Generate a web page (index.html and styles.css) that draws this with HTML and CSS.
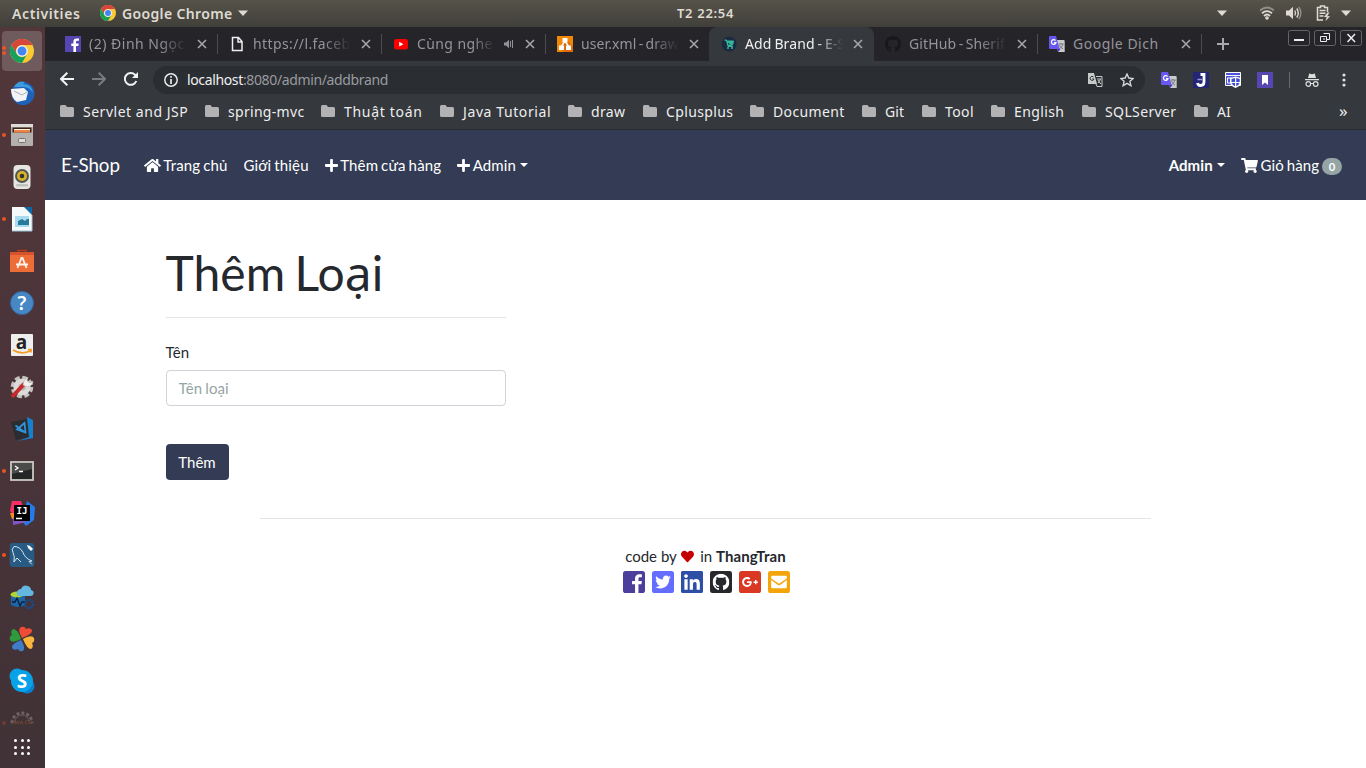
FILE: index.html
```html
<!DOCTYPE html>
<html lang="vi">
<head>
<meta charset="utf-8">
<title>Add Brand - E-Shop</title>
<link rel="stylesheet" href="styles.css">
</head>
<body>
<svg class="defs" aria-hidden="true">
  <symbol id="chrome" viewBox="0 0 24 24"><circle cx="12" cy="12" r="12" fill="#fcc934"/><path d="M1.6 6A12 12 0 0 1 22.4 6H12a6 6 0 0 0-5.2 9z" fill="#d8453a"/><path d="M1.6 6A12 12 0 0 0 12 24l5.2-9A6 6 0 0 1 6.8 15z" fill="#16a05b"/><circle cx="12" cy="12" r="5.8" fill="#f4f4f4"/><circle cx="12" cy="12" r="4.5" fill="#4285f4"/></symbol>
  <symbol id="folder" viewBox="0 0 14 12"><path d="M0 1.5Q0 0 1.500 0H5.500L7 2H12.500Q14 2 14 3.500V10.500Q14 12 12.500 12H1.500Q0 12 0 10.500z" fill="#b2b2b4"/></symbol>
  <symbol id="x" viewBox="0 0 10 10"><path d="M1 1l8 8M9 1L1 9" stroke="currentColor" stroke-width="1.600"/></symbol>
  <symbol id="translate" viewBox="0 0 16 16"><path d="M7 4h7.500a1.200 1.200 0 0 1 1.200 1.200V16H9z" fill="#c9cacb"/><path d="M9.500 8h5M12 7v1m2 0c-.5 2-2 4-4 5m.5-4c.8 2 2 3 3.500 4" stroke="#75777b" fill="none"/><path d="M1 0h6l3.600 13H1.200A1.200 1.200 0 0 1 0 11.800V1.200Q0 0 1 0z" fill="#6757f3"/><path d="M8.500 13h3L9 16z" fill="#4430c8"/><path d="M6.500 4.500A2.300 2.300 0 1 0 7 6.600H5" fill="none" stroke="#fff" stroke-width="1.200"/></symbol>
  <symbol id="octocat" viewBox="0 0 16 16"><path d="M8 0C3.580 0 0 3.580 0 8c0 3.540 2.290 6.530 5.470 7.590.4.070.55-.17.55-.38 0-.19-.01-.82-.01-1.490-2.010.37-2.530-.49-2.690-.94-.09-.23-.48-.94-.82-1.130-.28-.15-.68-.52-.01-.53.63-.01 1.080.58 1.230.82.72 1.210 1.870.87 2.330.66.070-.52.280-.87.510-1.070-1.780-.2-3.640-.89-3.640-3.950 0-.87.310-1.590.82-2.150-.08-.2-.36-1.020.08-2.120 0 0 .67-.21 2.200.82.640-.18 1.320-.27 2-.27s1.360.09 2 .27c1.530-1.040 2.200-.82 2.200-.82.440 1.100.160 1.920.08 2.120.510.560.82 1.270.82 2.150 0 3.070-1.870 3.750-3.650 3.950.290.250.540.730.540 1.480 0 1.070-.01 1.930-.01 2.200 0 .210.150.460.550.380A8.010 8.010 0 0 0 16 8c0-4.420-3.580-8-8-8z"/></symbol>
  <symbol id="plus" viewBox="0 0 448 512"><path d="M416 208H272V64c0-17.670-14.330-32-32-32h-32c-17.670 0-32 14.330-32 32v144H32c-17.670 0-32 14.330-32 32v32c0 17.670 14.330 32 32 32h144v144c0 17.670 14.330 32 32 32h32c17.670 0 32-14.330 32-32V304h144c17.670 0 32-14.330 32-32v-32c0-17.670-14.330-32-32-32z"/></symbol>
  <symbol id="cart" viewBox="0 0 576 512"><path d="M528.120 301.319l47.273-208C578.806 78.301 567.391 64 551.990 64H159.208l-9.166-44.810C147.758 8.021 137.930 0 126.529 0H24C10.745 0 0 10.745 0 24v16c0 13.255 10.745 24 24 24h69.883l70.248 343.435C147.325 417.100 136 435.222 136 456c0 30.928 25.072 56 56 56s56-25.072 56-56c0-15.674-6.447-29.835-16.824-40h209.647C430.447 426.165 424 440.326 424 456c0 30.928 25.072 56 56 56s56-25.072 56-56c0-22.172-12.888-41.332-31.579-50.405l5.517-24.276c3.413-15.018-8.002-29.319-23.403-29.319H218.117l-6.545-32h293.145c11.206 0 20.920-7.754 23.403-18.681z"/></symbol>
</svg>

<header class="topbar">
  <span class="activities">Activities</span>
  <svg class="app-icon"><use href="#chrome"/></svg>
  <span class="app-name">Google Chrome</span>
  <svg class="tri" viewBox="0 0 10 6"><path d="M0 .5h10L5 6z"/></svg>
  <span class="clock">T2 22:54</span>
  <div class="tray">
    <svg class="tri" viewBox="0 0 10 6"><path d="M0 .5h10L5 6z"/></svg>
    <svg class="wifi" viewBox="0 0 14 14"><path d="M0 4.500Q7-1.500 14 4.500" fill="none" stroke="#8f8d86" stroke-width="1.800"/><path d="M2 7.300Q7 3 12 7.300M4 10Q7 7 10 10" fill="none" stroke="#dfdbd2" stroke-width="1.800"/><circle cx="7" cy="12" r="1.800" fill="#dfdbd2"/></svg>
    <svg class="vol" viewBox="0 0 16 14"><path d="M0 4.500h3L7 .7v12.600L3 9.500H0z" fill="#dfdbd2"/><path d="M8.800 4.500q1.500 2.500 0 5M10.800 2.500q3 4.500 0 9" stroke="#dfdbd2" stroke-width="1.400" fill="none"/><path d="M12.800.8q4.200 6.200 0 12.400" stroke="#96948c" stroke-width="1.300" fill="none"/></svg>
    <svg class="bat" viewBox="0 0 15 16"><path d="M11.500 7V2.500h-3V1H4.500v1.500h-3V15H7" fill="none" stroke="#dfdbd2" stroke-width="1.500"/><path d="M3.500 5.500h6M3.500 8.300h6M3.500 11h4" stroke="#dfdbd2" stroke-width="1.500"/><path d="M11.500 7.500L8 12h2.700L9.500 16l4.700-4.800h-3L13.500 7.500z" fill="#dfdbd2"/></svg>
    <svg class="tri last" viewBox="0 0 10 6"><path d="M0 .5h10L5 6z"/></svg>
  </div>
</header>

<div class="desktop">
<nav class="dock">
  <div class="cell active two"><svg><use href="#chrome"/></svg></div>
  <div class="cell"><svg viewBox="0 0 24 24"><circle cx="13" cy="12.500" r="11.500" fill="#1d62b8"/><path d="M4 6Q8-1 15 1l-2 2Q22 3 23 12q-4-7-11-6z" fill="#3d9be0"/><path d="M1 8l13-1 4 4-2 8-9 2q-6-4-6-13z" fill="#f2f3f5"/><path d="M4 10l8 4 5-3" stroke="#a9adb8" fill="none"/></svg></div>
  <div class="cell one"><svg viewBox="0 0 24 24"><rect x="1" y="1" width="22" height="22" rx="1" fill="#b3b0ad"/><rect x="1" y="1" width="22" height="3" fill="#dedbd8"/><rect x="2.500" y="4.500" width="19" height="5" fill="#3c2418"/><rect x="4" y="6" width="16" height="3.500" fill="#ef8345"/><rect x="4" y="6" width="16" height="1" fill="#fff0dc"/><rect x="8.500" y="15.500" width="7" height="4" rx="1" fill="#ddd" stroke="#77736f"/></svg></div>
  <div class="cell"><svg viewBox="0 0 24 24"><rect x="3.500" y="0" width="17" height="24" rx="4" fill="#e5e5e3"/><circle cx="12" cy="11" r="7" fill="#55564f"/><circle cx="12" cy="11" r="5" fill="#d6b52a"/><circle cx="12" cy="11" r="2.300" fill="#333"/><rect x="6" y="19" width="12" height="2.500" rx="1" fill="#c1c1bf"/></svg></div>
  <div class="cell one"><svg viewBox="0 0 24 24"><path d="M2 0h13l7 7v17H2z" fill="#f6f9fa"/><path d="M14 0h8v8z" fill="#0f6aa3"/><path d="M22 8v16H2" stroke="#9fc4d8" fill="none"/><rect x="5" y="9" width="14" height="11" fill="#a8dbf0"/><path d="M8 18v-4l4-2 3 2 2-2h2v6z" fill="#287a9c"/></svg></div>
  <div class="cell"><svg viewBox="0 0 24 24"><path d="M8 5V1.500h8V5" stroke="#b83818" stroke-width="1.500" fill="none"/><path d="M0 3h24v20H0z" fill="#ed6d38"/><path d="M0 3h24v3H0z" fill="#d5542c"/><path d="M7.500 19l4-10h1l4 10M6 15.500h12" stroke="#fff2e8" stroke-width="1.800" fill="none"/></svg></div>
  <div class="cell"><svg viewBox="0 0 24 24"><circle cx="12" cy="12" r="11.500" fill="#4787c4" stroke="#306aa4"/><text x="12" y="19" text-anchor="middle" class="glyph help">?</text></svg></div>
  <div class="cell"><svg viewBox="0 0 24 24"><rect x="1" y="1" width="22" height="22" rx="1" fill="#eee"/><text x="11.500" y="15.500" text-anchor="middle" class="glyph amazon">a</text><path d="M3 17q9 5.500 18 .5M18 16.500h3v3" stroke="#f49a22" stroke-width="1.700" fill="none"/></svg></div>
  <div class="cell"><svg viewBox="0 0 24 24"><circle cx="12" cy="12" r="9.300" fill="none" stroke="#c4c2bf" stroke-width="4" stroke-dasharray="4.800 2.500"/><circle cx="12" cy="12" r="8.600" fill="#dddbd9"/><circle cx="12" cy="12" r="3.500" fill="#b5b0ae"/><path d="M2 22L15 8" stroke="#c72a2b" stroke-width="4"/><path d="M13 10q0-5 5-8l-1 4 3 2 3-2q0 5-6 6z" fill="#f2f1ef" stroke="#aaa" stroke-width=".6"/></svg></div>
  <div class="cell"><svg viewBox="0 0 24 24"><path d="M1 5l16-3 2 18-13 3z" fill="#292c30"/><path d="M17 0l6 3v18l-15 3 11-4z" fill="#1680cc"/><path d="M14.500 6L7 12.500l8.500 3zM5.500 8.500l9.500 7" stroke="#3495db" stroke-width="1.700" fill="none"/></svg></div>
  <div class="cell one"><svg viewBox="0 0 24 24"><rect x="1" y="3" width="22" height="18" fill="#252626" stroke="#ccc9c5" stroke-width="1.800"/><path d="M2 4h20v6L2 15z" fill="#4b4b4a"/><path d="M5 7l3 2-3 2M9 12.500h4" stroke="#fff" stroke-width="1.300" fill="none"/></svg></div>
  <div class="cell"><svg viewBox="0 0 24 24"><path d="M2 0h9l2 6-8 9-5-5z" fill="#fa2d69"/><path d="M0 12h8v6H2z" fill="#f48b25"/><path d="M17 0l8 6-1 13-8 6-4-5z" fill="#247bea"/><path d="M3 24v-7h10l4 4z" fill="#8555c8"/><rect x="4" y="4" width="16" height="16" fill="#000"/><text x="12" y="13" text-anchor="middle" class="glyph ij">IJ</text><path d="M6 17.500h6" stroke="#fff" stroke-width="1.500"/></svg></div>
  <div class="cell one"><svg viewBox="0 0 24 24"><rect x="-.3" y="0" width="24.600" height="24" rx="3" fill="#275b83"/><path d="M4 19Q5 13 3 9.500T4 3.500q6 0 9 6 2 6 9 8.500l-3 .5 3 3M4 19l3-4 4 4" stroke="#d9e6ef" fill="none"/><path d="M17 2l1 3 3 3 2-2-3-3z" fill="#fff"/></svg></div>
  <div class="cell"><svg viewBox="0 0 24 24"><path d="M1 10q0-3 7-3t7 3v10q-7 4-14 0z" fill="#1d66a4"/><ellipse cx="7" cy="9.500" rx="6.500" ry="3" fill="#b2d235"/><path d="M10 11q-4 0-3-4 1-3 4-3 2-5 7-3 3 1 3 4 4 1 2 5-1 1-3 1z" fill="#64b7df"/><path d="M2 17h3l2-4 3 8 2-4h3" stroke="#071e3a" stroke-width="1.300" fill="none"/><circle cx="19" cy="19" r="4" fill="none" stroke="#164d91" stroke-width="2.500" stroke-dasharray="2 1"/></svg></div>
  <div class="cell"><svg viewBox="0 0 24 24"><path d="M12 11Q7 2 11 0q4-1 5 2 4-2 6 1 1 4-10 8z" fill="#ef4c36"/><path d="M13 12q9-5 11-1 1 4-2 5 2 4-1 6-4 0-8-10z" fill="#fbb43c"/><path d="M11 13q5 8 2 11-4 1-5-2-4 2-6-1-1-4 9-8z" fill="#3e7ec8"/><path d="M11 12Q2 17 0 13q-1-4 2-5-2-4 1-6 5 0 8 10z" fill="#2e9a3c"/></svg></div>
  <div class="cell"><svg viewBox="0 0 24 24"><circle cx="7" cy="7" r="7.500" fill="#0ba0e4"/><circle cx="17" cy="17" r="7.500" fill="#087fd2"/><circle cx="12" cy="12" r="11" fill="#08a2e8"/><text x="12" y="19" text-anchor="middle" class="glyph skype">S</text></svg></div>
  <div class="cell clipped one"><svg viewBox="0 0 24 24"><path d="M2 15a10 10 0 0 1 20 0" fill="none" stroke="#928888" stroke-width="3" stroke-dasharray="3 2"/><path d="M5 14a7 7 0 0 1 14 0" fill="none" stroke="#867b7b"/><text x="12" y="16" text-anchor="middle" class="glyph javacc">Java CC</text></svg></div>
  <div class="apps"><i></i><i></i><i></i><i></i><i></i><i></i><i></i><i></i><i></i></div>
</nav>

<main class="window">
  <div class="tabs">
    <div class="tab"><svg class="fav" viewBox="0 0 16 16"><path d="M0 0h16v16H0z" fill="#5646b1"/><path d="M11 16V10h2.300l.4-2.500H11V6q0-1.200 1.300-1.200H14V2.400h-2.300Q8.400 2.400 8.400 5.500v2H6.300V10h2.100v6z" fill="#fff"/></svg><span class="t1">(2) Đinh Ngọc</span><svg class="close"><use href="#x"/></svg></div>
    <div class="tab"><svg class="fav" viewBox="0 0 16 16"><path d="M3.500 1.500h6l3.500 4v9H3.500zM9 1.500V6h4" fill="none" stroke="#eee" stroke-width="1.500"/></svg><span class="t2">https://l.faceb</span><svg class="close"><use href="#x"/></svg></div>
    <div class="tab"><svg class="fav" viewBox="0 0 16 16"><rect x="1" y="3" width="14" height="10.500" rx="2.500" fill="#f00"/><path d="M6.200 5.800v4.800l4.200-2.400z" fill="#fff"/></svg><span class="short">Cùng nghe</span><svg class="sound" viewBox="0 0 10 10"><path d="M0 3.500h2L5 .8v8.400L2 6.500H0z" fill="#919299"/><path d="M6.500 2v6M8.500 1v8" stroke="#919299"/></svg><svg class="close"><use href="#x"/></svg></div>
    <div class="tab"><svg class="fav" viewBox="0 0 16 16"><path d="M0 0h16v16H0z" fill="#f08705"/><path d="M8 2l8 8v6H7l-4-3z" fill="#df6c0c"/><path d="M8 5l-4 6M8 5l4 6" stroke="#fff" stroke-width="1.500"/><path d="M5.500 2h5v4.500h-5zM2 9.500h5V14H2zM9 9.500h5V14H9z" fill="#fff"/></svg><span class="t4">user.xml - draw</span><svg class="close"><use href="#x"/></svg></div>
    <div class="tab current"><svg class="fav" viewBox="0 0 16 16"><circle cx="8" cy="8" r="7.500" fill="#1c2a42"/><path d="M3.500 4h2l1.500 6.500h5M6 5h6.500l-1 4H6.700z" stroke="#35b89a" fill="#35b89a"/><circle cx="7" cy="12" r="1" fill="#35b89a"/><circle cx="11" cy="12" r="1" fill="#35b89a"/></svg><span class="t5">Add Brand - E-S</span><svg class="close"><use href="#x"/></svg></div>
    <div class="tab noline"><svg class="fav" fill="#17181a"><use href="#octocat"/></svg><span class="t6">GitHub - Sherif</span><svg class="close"><use href="#x"/></svg></div>
    <div class="tab"><svg class="fav"><use href="#translate"/></svg><span class="t7">Google Dịch</span><svg class="close"><use href="#x"/></svg></div>
    <svg class="newtab" viewBox="0 0 12 12"><path d="M6 0v12M0 6h12" stroke="#a9aaad" stroke-width="2"/></svg>
    <div class="winbtns">
      <svg viewBox="0 0 22 16"><rect x=".5" y=".5" width="21" height="15" rx="2"/><path d="M6 10h10" class="bold"/></svg>
      <svg viewBox="0 0 22 16"><rect x=".5" y=".5" width="21" height="15" rx="2"/><path d="M9.500 3.500h6v6h-3M6.500 6.500h6v5h-6zM9 9h2" class="thin"/></svg>
      <svg viewBox="0 0 22 16"><rect x=".5" y=".5" width="21" height="15" rx="2"/><path d="M7.500 4l7.500 8M15 4l-7.500 8"/></svg>
    </div>
  </div>

  <div class="toolbar">
    <svg class="back" viewBox="0 0 14 14"><path d="M14 7H1M7.300.7L1 7l6.300 6.300" stroke="#f3f3f3" stroke-width="2" fill="none"/></svg>
    <svg class="fwd" viewBox="0 0 14 14"><path d="M0 7h13M6.700.7L13 7l-6.300 6.300" stroke="#797b7e" stroke-width="2" fill="none"/></svg>
    <svg class="reload" viewBox="0 0 14 14"><path d="M12.300 9A5.900 5.900 0 1 1 11 2.800L12.500 4.500" stroke="#f3f3f3" stroke-width="2" fill="none"/><path d="M14 0v6H8z" fill="#f3f3f3"/></svg>
    <div class="omnibox">
      <svg class="info" viewBox="0 0 14 14"><circle cx="7" cy="7" r="6.200" fill="none" stroke="#e8e8e8" stroke-width="1.500"/><path d="M7 6v5M7 3v1.700" stroke="#e8e8e8" stroke-width="1.700"/></svg>
      <span class="url"><b>localhost</b>:8080/admin/addbrand</span>
      <svg class="omni-t" viewBox="0 0 15 14"><path d="M8 3.500h6v10H9L8 11" fill="none" stroke="#c8c9ca" stroke-width="1"/><path d="M0 0h6l3 11H0z" fill="#c8c9ca"/><path d="M5.500 4A2 2 0 1 0 6 6H4.200" fill="none" stroke="#333"/><path d="M9 6h4m-.5 0q-1 3-2.500 4m0-3q1 2 3 4" stroke="#c8c9ca" fill="none"/></svg>
      <svg class="star" viewBox="0 0 14 14"><path d="M7 1l1.800 4 4.400.5L9.900 8.300l1 4.400L7 10.400l-3.900 2.300 1-4.400L.8 5.500 5.200 5z" fill="none" stroke="#d4d5d5" stroke-width="1.400"/></svg>
    </div>
    <div class="extensions">
      <svg viewBox="0 0 16 16"><use href="#translate"/></svg>
      <svg viewBox="0 0 16 16"><rect width="16" height="16" rx="1" fill="#252577"/><path d="M7.500 2.500H11V10q0 3.500-3.500 3.500-2.500 0-3-2.500" stroke="#fff" stroke-width="2.800" fill="none"/><path d="M4.500 7.500H9" stroke="#8ba0dd" stroke-width="1.500"/></svg>
      <svg viewBox="0 0 16 16"><path d="M.5.500h15v13H.5z" fill="#4b55d8" stroke="#fff"/><path d="M1 3.500h14M2.500 6H7v5H2.500z" stroke="#fff" fill="none"/><path d="M10.500 4.500L16 6v4.500q-1 4-5.500 5.500-4.500-1.500-5.500-5.500V6z" fill="#fff"/><path d="M10 6L6.500 7v3H10zM11.200 6l3.500 1v3h-3.500zM6.600 11H10v3.300Q7.500 13.300 6.600 11zM11.200 11h3.400q-.9 2.300-3.400 3.300z" fill="#3e4ed2"/></svg>
      <svg viewBox="0 0 16 16"><path d="M0 0h16v16H0z" fill="#5646b1"/><path d="M5 3h6v10L8 10.500 5 13z" fill="#fff"/></svg>
      <i class="divider"></i>
      <svg class="incog" viewBox="0 0 14 14"><path d="M3 5l1.200-4.500L7 1.200 9.800.5 11 5zM0 6h14v1.300H0z" fill="#ddd"/><circle cx="3.300" cy="11" r="2.300" fill="none" stroke="#ddd" stroke-width="1.200"/><circle cx="10.700" cy="11" r="2.300" fill="none" stroke="#ddd" stroke-width="1.200"/><path d="M5.500 10.500h3" stroke="#ddd"/></svg>
      <svg class="dots" viewBox="0 0 4 14"><circle cx="2" cy="2" r="1.600"/><circle cx="2" cy="7" r="1.600"/><circle cx="2" cy="12" r="1.600"/></svg>
    </div>
  </div>

  <div class="bookmarks">
    <a><svg><use href="#folder"/></svg>Servlet and JSP</a>
    <a><svg><use href="#folder"/></svg>spring-mvc</a>
    <a><svg><use href="#folder"/></svg>Thuật toán</a>
    <a><svg><use href="#folder"/></svg>Java Tutorial</a>
    <a><svg><use href="#folder"/></svg>draw</a>
    <a><svg><use href="#folder"/></svg>Cplusplus</a>
    <a><svg><use href="#folder"/></svg>Document</a>
    <a><svg><use href="#folder"/></svg>Git</a>
    <a><svg><use href="#folder"/></svg>Tool</a>
    <a><svg><use href="#folder"/></svg>English</a>
    <a><svg><use href="#folder"/></svg>SQLServer</a>
    <a><svg><use href="#folder"/></svg>AI</a>
    <span class="more">»</span>
  </div>

  <section class="page">
    <nav class="navbar">
      <a class="brand">E-Shop</a>
      <a class="link"><svg class="fa wide" viewBox="0 0 576 512"><path d="M280.370 148.260L96 300.110V464a16 16 0 0 0 16 16l112.060-.29a16 16 0 0 0 15.920-16V368a16 16 0 0 1 16-16h64a16 16 0 0 1 16 16v95.640a16 16 0 0 0 16 16.050L464 480a16 16 0 0 0 16-16V300L295.670 148.260a12.190 12.190 0 0 0-15.300 0zM571.600 251.470L488 182.560V44.050a12 12 0 0 0-12-12h-56a12 12 0 0 0-12 12v72.610L318.470 43a48 48 0 0 0-61 0L4.340 251.470a12 12 0 0 0-1.600 16.900l25.500 31A12 12 0 0 0 45.150 301l235.220-193.740a12.190 12.190 0 0 1 15.300 0L530.900 301a12 12 0 0 0 16.900-1.600l25.500-31a12 12 0 0 0-1.700-16.930z"/></svg> Trang chủ</a>
      <a class="link">Giới thiệu</a>
      <a class="link"><svg class="fa"><use href="#plus"/></svg> Thêm cửa hàng</a>
      <a class="link caret"><svg class="fa"><use href="#plus"/></svg> Admin</a>
      <div class="right">
        <a class="link caret strong">Admin</a>
        <a class="link"><svg class="fa wide"><use href="#cart"/></svg> Giỏ hàng <span class="badge">0</span></a>
      </div>
    </nav>
    <div class="container">
      <form class="form">
        <h1>Thêm Lo<span class="alt">ạ</span>i</h1>
        <hr>
        <label for="name">Tên</label>
        <input id="name" type="text" placeholder="Tên loại">
        <button type="button">Thêm</button>
      </form>
    </div>
    <footer>
      <p>code by <svg class="heart" viewBox="0 0 512 512"><path d="M462.300 62.600C407.500 15.900 326 24.300 275.700 76.200L256 96.500l-19.700-20.300C186.100 24.300 104.500 15.900 49.700 62.600c-62.800 53.600-66.100 149.800-9.900 207.900l193.500 199.800c12.500 12.900 32.800 12.900 45.300 0l193.500-199.800c56.300-58.100 53-154.300-9.800-207.900z"/></svg> in <b>ThangTran</b></p>
      <div class="social">
        <svg viewBox="0 32 448 448" fill="#4b3f9b"><path d="M448 80v352c0 26.500-21.500 48-48 48h-85.300V302.800h60.600l8.700-67.600h-69.300V192c0-19.600 5.400-32.900 33.500-32.900H384V98.700c-6.200-.8-27.400-2.700-52.200-2.700-51.600 0-87 31.500-87 89.400v49.900H184v67.600h60.900V480H48c-26.500 0-48-21.500-48-48V80c0-26.500 21.500-48 48-48h352c26.500 0 48 21.500 48 48z"/></svg>
        <svg viewBox="0 32 448 448" fill="#656dff"><path d="M400 32H48C21.500 32 0 53.500 0 80v352c0 26.500 21.500 48 48 48h352c26.500 0 48-21.500 48-48V80c0-26.500-21.500-48-48-48zm-48.900 158.800c.2 2.800.2 5.700.2 8.500 0 86.700-66 186.600-186.600 186.600-37.200 0-71.700-10.800-100.700-29.400 5.300.6 10.400.8 15.800.8 30.700 0 58.900-10.400 81.400-28-28.800-.6-53-19.500-61.300-45.500 10.100 1.500 19.200 1.500 29.600-1.200-30-6.100-52.500-32.500-52.500-64.400v-.8c8.700 4.900 18.900 7.900 29.600 8.300a65.447 65.447 0 0 1-29.200-54.600c0-12.200 3.200-23.400 8.900-33.100 32.300 39.800 80.800 65.800 135.200 68.600-9.300-44.500 24-80.600 64-80.600 18.900 0 35.900 7.900 47.900 20.700 14.800-2.800 29-8.300 41.600-15.800-4.900 15.200-15.200 28-28.800 36.100 13.200-1.400 26-5.100 37.800-10.200-8.900 13.100-20.100 24.700-32.900 34z"/></svg>
        <svg viewBox="0 32 448 448" fill="#2d4fa5"><path d="M416 32H31.900C14.300 32 0 46.500 0 64.300v383.400C0 465.500 14.300 480 31.900 480H416c17.600 0 32-14.500 32-32.300V64.300c0-17.800-14.400-32.300-32-32.300zM135.400 416H69V202.200h66.500V416zm-33.200-243c-21.300 0-38.500-17.300-38.500-38.500S80.900 96 102.200 96c21.200 0 38.500 17.300 38.500 38.500 0 21.300-17.200 38.500-38.500 38.500zm282.100 243h-66.400V312c0-24.800-.5-56.700-34.500-56.700-34.600 0-39.900 27-39.900 54.900V416h-66.400V202.200h63.700v29.200h.9c8.900-16.800 30.600-34.500 62.900-34.500 67.200 0 79.700 44.300 79.700 101.900V416z"/></svg>
        <svg viewBox="0 0 448 448"><rect width="448" height="448" rx="48" fill="#25282d"/><use href="#octocat" x="54" y="54" width="340" height="340" fill="#fff"/></svg>
        <svg viewBox="0 32 448 448" fill="#d93823"><path d="M400 32H48C21.500 32 0 53.500 0 80v352c0 26.500 21.500 48 48 48h352c26.500 0 48-21.500 48-48V80c0-26.500-21.500-48-48-48zM164 356c-55.300 0-100-44.700-100-100s44.700-100 100-100c27 0 49.500 9.800 67 26.200l-27.100 26.100c-7.400-7.100-20.300-15.400-39.800-15.400-34.100 0-61.900 28.200-61.900 63.200 0 34.900 27.800 63.200 61.900 63.200 39.600 0 54.400-28.500 56.800-43.100H164v-34.400h94.400c1 5 1.600 10.100 1.600 16.600 0 57.100-38.300 97.600-96 97.600zm220-81.800h-29v29h-29.200v-29h-29V245h29v-29H355v29h29v29.200z"/></svg>
        <svg viewBox="0 32 448 448" fill="#f4a50b"><path d="M400 32H48C21.490 32 0 53.490 0 80v352c0 26.510 21.490 48 48 48h352c26.510 0 48-21.490 48-48V80c0-26.510-21.490-48-48-48zM178.117 262.104C87.429 196.287 88.353 196.121 64 177.167V152c0-13.255 10.745-24 24-24h272c13.255 0 24 10.745 24 24v25.167c-24.371 18.969-23.434 19.124-114.117 84.938-10.500 7.655-31.392 26.120-45.883 25.894-14.503.218-35.367-18.227-45.883-25.895zM384 217.775V360c0 13.255-10.745 24-24 24H88c-13.255 0-24-10.745-24-24V217.775c13.958 10.794 33.329 25.236 95.303 70.214 14.162 10.341 37.975 32.145 64.694 32.010 26.887.134 51.037-22.041 64.720-32.025 61.958-44.964 81.325-59.406 95.283-70.199z"/></svg>
      </div>
    </footer>
  </section>
</main>
</div>
</body>
</html>
```
FILE: styles.css
```css
* { box-sizing: border-box; }
body { margin: 0; width: 1366px; height: 768px; overflow: hidden; font-family: "Noto Sans", "Open Sans", sans-serif; }
svg { display: block; flex: none; }
.defs { position: absolute; width: 0; height: 0; }

/* Desktop top bar */
.topbar { height: 27px; display: grid; grid-template-columns: 88px 22px 116px 439px 1fr auto; align-items: center; padding: 0 0 1px 12px; background: linear-gradient(#56534a, #403f39); color: #dfdbd2; font-size: 14px; font-weight: 600; white-space: nowrap; }
.activities { letter-spacing: .6px; }
.app-name { letter-spacing: .35px; }
.app-icon { width: 16px; height: 16px; }
.tri { width: 10px; height: 6px; fill: #dfdbd2; }
.clock { font-size: 13px; letter-spacing: .7px; }
.tray { display: flex; align-items: center; padding-right: 15px; }
.wifi { width: 14px; height: 14px; margin-left: 33px; }
.vol { width: 16px; height: 14px; margin-left: 12px; }
.bat { width: 15px; height: 16px; margin-left: 14px; }
.tray .last { margin-left: 10px; }

.desktop { display: flex; height: 741px; }

/* Dock */
.dock { width: 45px; padding-top: 3px; background: linear-gradient(#52373a, #4a343a 50%, #403236); display: flex; flex-direction: column; }
.cell { position: relative; height: 42px; flex: none; display: flex; align-items: center; padding-left: 10px; }
.cell svg { width: 24px; height: 24px; overflow: visible; }
.cell.active { height: 40px; margin: 1px 3px 1px 2px; padding-left: 8px; background: #6f5a5d; border-radius: 4px; }
.cell.one::before, .cell.two::before { content: ""; position: absolute; left: 2px; top: 19px; width: 4px; height: 4px; border-radius: 50%; background: #e95420; }
.cell.two::before { left: 0; top: 15px; box-shadow: 0 5px #e95420; }
.cell.clipped { height: 27px; opacity: .55; align-items: flex-start; padding-top: 6px; }
.cell.clipped::before { opacity: .5; }
.glyph { font-family: "Noto Sans", sans-serif; fill: #fff; }
.help { font-size: 19px; font-weight: 600; }
.amazon { font-size: 19px; font-weight: 700; fill: #222; }
.ij { font: 700 9px "DejaVu Sans Mono", monospace; }
.skype { font-size: 19px; font-weight: 700; }
.javacc { font-size: 6px; fill: #b4653a; }
.apps { display: grid; grid-template-columns: repeat(3, 3px); gap: 3.5px; padding: 10px 0 0 14px; }
.apps i { width: 3px; height: 3px; border-radius: 50%; background: #fff; }

/* Browser chrome */
.window { width: 1321px; background: #fff; }
.tabs { height: 34px; display: flex; padding-left: 8px; background: #252429; font-size: 14px; color: #94959b; }
.tab { position: relative; width: 164px; display: flex; align-items: center; padding-left: 12px; }
.tab::after { content: ""; position: absolute; right: -1px; top: 7px; width: 1px; height: 20px; background: #4b4b50; }
.tab:nth-child(4)::after, .tab.current::after { display: none; }
.fav { width: 16px; height: 16px; margin-right: 8px; }
.tab span { width: 98px; padding-bottom: 2px; white-space: nowrap; letter-spacing: .35px; -webkit-mask-image: linear-gradient(90deg, #000 72%, transparent); mask-image: linear-gradient(90deg, #000 72%, transparent); }
.tab span.short { width: 78px; letter-spacing: .4px; }
.tab span.t1 { letter-spacing: .5px; }
.tab span.t2 { letter-spacing: .4px; }
.tab span.t4 { letter-spacing: .1px; word-spacing: -1.5px; }
.tab span.t5 { letter-spacing: .1px; word-spacing: -.8px; }
.tab span.t6 { letter-spacing: .1px; word-spacing: -1.2px; }
.tab span.t7 { letter-spacing: .5px; -webkit-mask: none; mask: none; }
.close { width: 10px; height: 10px; margin-left: 10px; color: #a5a6aa; }
.sound { width: 10px; height: 10px; margin-left: 9px; }
.sound + .close { margin-left: 11px; }
.current { background: #35383d; color: #f0f0f0; border-radius: 8px 8px 0 0; width: 165px; margin-right: -1px; }
.newtab { width: 12px; height: 12px; margin: 11px 0 0 16px; }
.winbtns { display: flex; gap: 4px; margin: 3px 4px 0 auto; }
.winbtns svg { width: 22px; height: 16px; fill: none; stroke: #eee; stroke-width: 1.5; }
.winbtns rect { stroke: #65656a; stroke-width: 1; }
.winbtns .bold { stroke-width: 2; }
.winbtns .thin { stroke-width: 1; }
.toolbar { height: 36px; display: flex; align-items: center; padding-left: 15px; background: #35383d; }
.back, .fwd, .reload { width: 14px; height: 14px; margin-right: 18px; }
.reload { margin-right: 15px; }
.omnibox { width: 992px; height: 28px; margin-top: 2px; border-radius: 14px; background: #2a2d32; display: flex; align-items: center; padding: 0 11px; }
.info { width: 14px; height: 14px; margin-right: 9px; }
.url { padding-bottom: 2px; color: #999b9f; font-size: 14px; letter-spacing: -.36px; white-space: nowrap; }
.url b { color: #f0f0f0; font-weight: 400; }
.omni-t { width: 15px; height: 14px; margin-left: auto; }
.star { width: 14px; height: 14px; margin: 0 0 0 17px; }
.extensions { display: flex; align-items: center; gap: 16px; margin: 2px 0 0 16px; }
.extensions svg { width: 16px; height: 16px; }
.divider { width: 1px; height: 16px; background: #66696d; }
.extensions .incog { width: 14px; height: 14px; margin-left: -1px; }
.extensions .dots { width: 4px; height: 14px; fill: #e0e0e0; margin-left: 7px; }
.bookmarks { height: 33px; display: flex; padding: 0 0 4px 15px; background: #35383d; border-bottom: 1px solid #292b2e; color: #eee; font-size: 14px; letter-spacing: .38px; white-space: nowrap; }
.bookmarks a { display: flex; align-items: center; gap: 9px; }
.bookmarks svg { width: 14px; height: 12px; }
.bookmarks a:nth-child(1) { width: 145px; letter-spacing: .52px; }
.bookmarks a:nth-child(2) { width: 116px; letter-spacing: .3px; }
.bookmarks a:nth-child(3) { width: 119px; letter-spacing: .7px; }
.bookmarks a:nth-child(4) { width: 128px; letter-spacing: .6px; }
.bookmarks a:nth-child(5) { width: 75px; }
.bookmarks a:nth-child(6) { width: 107px; }
.bookmarks a:nth-child(7) { width: 112px; }
.bookmarks a:nth-child(8) { width: 60px; letter-spacing: .1px; }
.bookmarks a:nth-child(9) { width: 69px; }
.bookmarks a:nth-child(10) { width: 91px; }
.bookmarks a:nth-child(11) { width: 112px; }
.bookmarks a:nth-child(12) { letter-spacing: 0; }
.more { margin: 3px 18px 0 auto; font-size: 17px; line-height: 22px; }

/* Shop page */
.page { font-family: Lato, sans-serif; font-size: 15px; line-height: 1.5; color: #25282d; }
.navbar { height: 70px; display: flex; align-items: center; padding: 0 16px; background: #333c54; color: #fff; white-space: nowrap; }
.brand { font-size: 18.75px; margin-right: 16px; letter-spacing: -.1px; }
.link { padding: 0 8px; word-spacing: -1px; letter-spacing: .14px; }
.right { margin-left: auto; display: flex; }
.right .link { letter-spacing: .08px; }
.fa { display: inline-block; height: 15px; width: 13px; vertical-align: -2px; fill: #fff; }
.fa.wide { width: 17px; }
.caret::after { content: ""; display: inline-block; margin-left: 4px; vertical-align: 4px; border-top: 4.5px solid; border-left: 4.5px solid transparent; border-right: 4.5px solid transparent; }
.strong { font-weight: 700; }
.badge { display: inline-block; padding: 3px 6.7px; border-radius: 10px; background: #95a5a6; font-size: 11.25px; font-weight: 700; line-height: 11px; vertical-align: 0; }
.container { width: 1140px; margin: 0 auto; padding: 44px 30px 0; }
.form { width: 340px; }
h1 { margin: 0; font-size: 48px; font-weight: 400; line-height: 57.6px; word-spacing: -3px; letter-spacing: .05px; }
.alt { font-family: "Noto Sans", sans-serif; line-height: 1; }
hr { margin: 15px 0 23px; border: 0; border-top: 1px solid #e5e5e6; }
label { display: block; margin-bottom: 7px; }
input { display: block; width: 100%; height: 36px; padding: 0 12px; border: 1px solid #ced4da; border-radius: 4px; font: inherit; letter-spacing: .1px; word-spacing: -1px; background: #fff; }
input::placeholder { color: #95a5a6; opacity: 1; }
button { display: block; width: 63px; height: 36px; margin-top: 38px; padding: 0; border: 0; border-radius: 4px; background: #333c54; color: #fff; font: inherit; }
footer { width: 891px; margin: 38px auto 0; padding-top: 26px; border-top: 1px solid #e5e5e6; text-align: center; }
footer p { margin: 0; height: 26px; }
footer b { letter-spacing: .1px; }
.heart { display: inline-block; width: 15px; height: 13px; margin-right: 1px; vertical-align: -1px; fill: #c40000; }
.social { display: flex; justify-content: center; gap: 7px; padding-left: 1px; }
.social svg { width: 22px; height: 22px; }
```
